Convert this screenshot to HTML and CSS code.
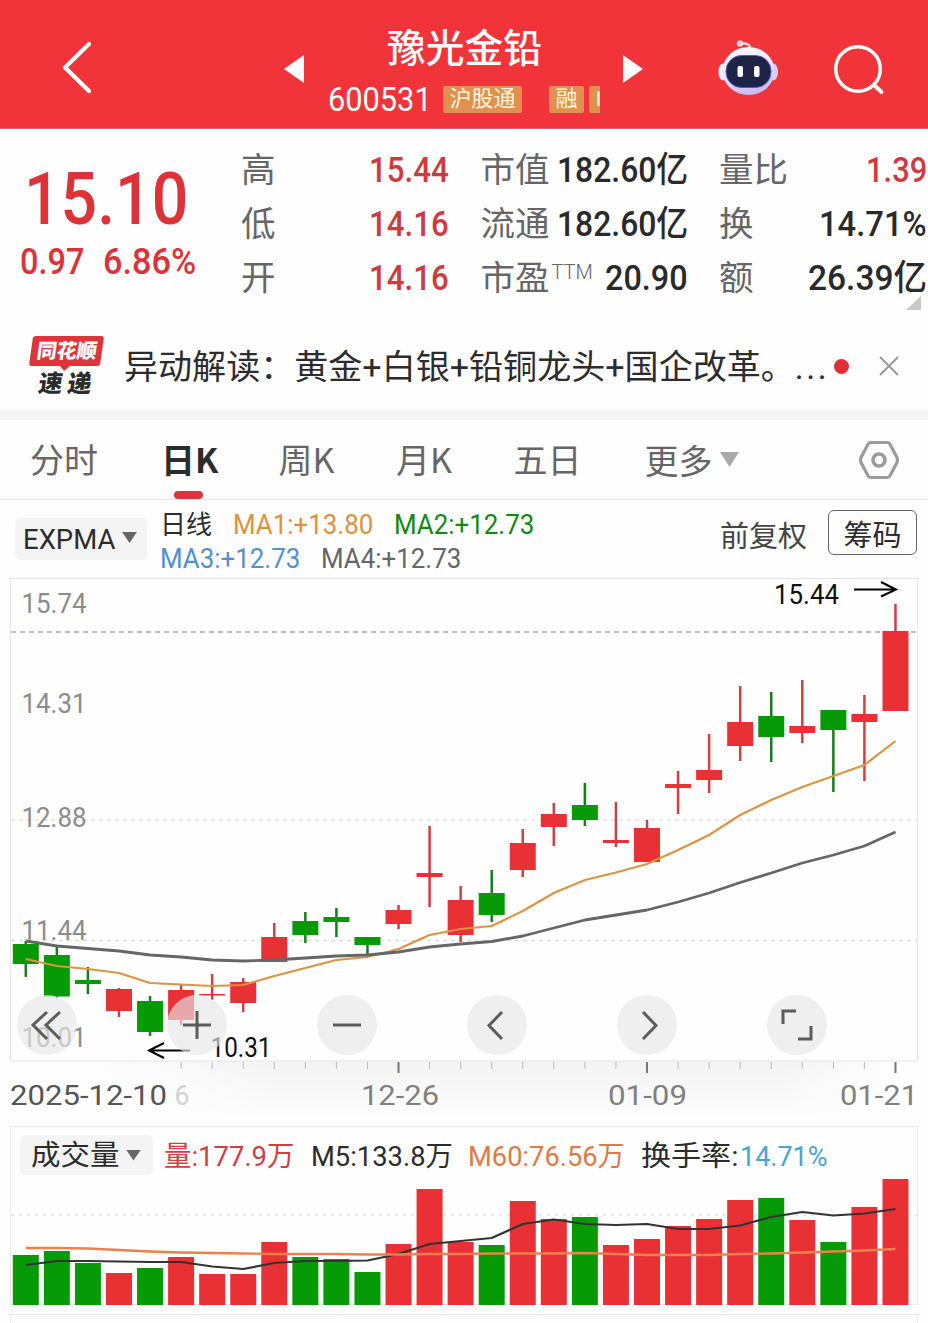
FILE: index.html
```html
<!DOCTYPE html>
<html lang="zh-CN">
<head>
<meta charset="utf-8">
<title>豫光金铅 600531</title>
<link rel="stylesheet" href="styles.css">
</head>
<body>
<header class="topbar">
  <svg class="back" width="34" height="56" viewBox="0 0 34 56"><path d="M29 5 5 28.500 29 52" fill="none" stroke="#fff" stroke-width="4.200" stroke-linecap="round" stroke-linejoin="round"/></svg>
  <div class="switcher">
    <svg width="20" height="28" viewBox="0 0 20 28"><path d="M20 0V28L0 14Z" fill="#fff"/></svg>
    <div class="stock">
      <div class="name"><span class="fit" data-w="155">豫光金铅</span></div>
      <div class="code-row">
        <span class="fit code" data-w="104">600531</span>
        <span class="tag tag-hgt">沪股通</span>
        <span class="tag tag-rong">融</span>
        <span class="tag tag-cut"><i></i></span>
      </div>
    </div>
    <svg width="20" height="28" viewBox="0 0 20 28"><path d="M0 0V28L20 14Z" fill="#fff"/></svg>
  </div>
  <svg class="robot" width="60" height="58" viewBox="718 39 60 58">
    <defs><linearGradient id="shell" x1="0" y1="0" x2="0.300" y2="1"><stop offset="0" stop-color="#fff"/><stop offset=".6" stop-color="#e9e2fb"/><stop offset="1" stop-color="#c9bdf5"/></linearGradient></defs>
    <path d="M741 44Q750 42 750 49" fill="none" stroke="#fbd3dc" stroke-width="2.400"/>
    <circle cx="740" cy="43.500" r="3.200" fill="#fbd3dc"/>
    <ellipse cx="723" cy="72" rx="4.500" ry="8.500" fill="#f5efff"/>
    <ellipse cx="773.500" cy="72" rx="4.500" ry="8.500" fill="#d8ccf8"/>
    <ellipse cx="748.500" cy="71" rx="26" ry="24" fill="url(#shell)"/>
    <rect x="726" y="55.500" width="45" height="32" rx="15.500" fill="#1d2445" stroke="#5b56c8" stroke-width="1"/>
    <rect x="737.500" y="66" width="5.500" height="11" rx="2" fill="#fff"/>
    <rect x="754" y="66" width="5.500" height="11" rx="2" fill="#fff"/>
  </svg>
  <svg class="search" width="54" height="54" viewBox="833 43 54 54"><circle cx="858" cy="69" r="22.300" fill="none" stroke="#fff" stroke-width="3.500"/><path d="M874 85 881.500 92" stroke="#fff" stroke-width="4" stroke-linecap="round"/></svg>
</header>

<section class="quote">
  <div class="price">
    <div class="last"><span class="fit" data-w="164">15.10</span></div>
    <div class="change"><span class="fit" data-w="64">0.97</span><span class="fit" data-w="93">6.86%</span></div>
  </div>
  <dl class="stats">
    <div><dt>高</dt><dd class="up"><span class="fit" data-w="80">15.44</span></dd></div>
    <div><dt>市值</dt><dd><span class="fit" data-w="131">182.60亿</span></dd></div>
    <div><dt>量比</dt><dd class="up"><span class="fit" data-w="61">1.39</span></dd></div>
    <div><dt>低</dt><dd class="up"><span class="fit" data-w="80">14.16</span></dd></div>
    <div><dt>流通</dt><dd><span class="fit" data-w="131">182.60亿</span></dd></div>
    <div><dt>换</dt><dd><span class="fit" data-w="108">14.71%</span></dd></div>
    <div><dt>开</dt><dd class="up"><span class="fit" data-w="80">14.16</span></dd></div>
    <div><dt>市盈<sup>TTM</sup></dt><dd><span class="fit" data-w="83">20.90</span></dd></div>
    <div><dt>额</dt><dd><span class="fit" data-w="119">26.39亿</span></dd></div>
  </dl>
  <svg class="corner" width="15" height="14" viewBox="0 0 15 14"><path d="M15 0V14H0Z" fill="#c8c8c8"/></svg>
</section>

<section class="news">
  <div class="brand">
    <div class="brand-top"><span class="fit" data-w="60">同花顺</span></div>
    <div class="brand-bottom"><span>速</span><span>递</span></div>
  </div>
  <div class="headline"><span class="fit" data-w="705">异动解读：黄金+白银+铅铜龙头+国企改革。<span class="dots">...</span></span></div>
  <i class="dot"></i>
  <svg class="close" width="22" height="22" viewBox="0 0 22 22"><path d="M2 2 20 20M20 2 2 20" stroke="#999" stroke-width="2"/></svg>
</section>

<nav class="tabs">
  <span>分时</span><span class="active">日K</span><span>周K</span><span>月K</span><span>五日</span>
  <span class="more">更多<svg width="19" height="15" viewBox="0 0 19 15"><path d="M0 0H19L9.500 15Z" fill="#aaa"/></svg></span>
  <svg class="settings" width="42" height="40" viewBox="0 0 42 40"><path d="M13 2.500H29Q31 2.500 32 4.200L39 17.500Q40 20 39 22.500L32 35.800Q31 37.500 29 37.500H13Q11 37.500 10 35.800L3 22.500Q2 20 3 17.500L10 4.200Q11 2.500 13 2.500Z" fill="none" stroke="#9b9b9b" stroke-width="3.200"/><circle cx="21" cy="20" r="6" fill="none" stroke="#9b9b9b" stroke-width="3.600"/></svg>
</nav>

<section class="indicator">
  <button class="pill expma"><span class="fit" data-w="92">EXPMA</span><i class="caret"></i></button>
  <div class="ma">
    <div><span class="fit period" data-w="52">日线</span><span class="fit c-orange" data-w="140">MA1:+13.80</span><span class="fit c-green" data-w="140">MA2:+12.73</span></div>
    <div><span class="fit c-blue" data-w="140">MA3:+12.73</span><span class="fit c-gray" data-w="140">MA4:+12.73</span></div>
  </div>
  <span class="adjust">前复权</span>
  <button class="chips">筹码</button>
</section>

<section class="kline">
  <svg id="kline" width="928" height="548" viewBox="0 578 928 548"></svg>
  <div class="controls">
    <button><svg viewBox="0 0 60 60"><path d="M30 17 16 30 30 44M43 17 29 30 43 44"/></svg></button>
    <button><svg viewBox="0 0 60 60"><path d="M16 30H44M30 16V44"/></svg></button>
    <button><svg viewBox="0 0 60 60"><path d="M16 30H44"/></svg></button>
    <button><svg viewBox="0 0 60 60"><path d="M35 17 22 30.500 35 44"/></svg></button>
    <button><svg viewBox="0 0 60 60"><path d="M26 17 39 30.500 26 44"/></svg></button>
    <button><svg viewBox="0 0 60 60"><path d="M16 29V16H29M44 31V44H31"/></svg></button>
  </div>
</section>

<section class="volume">
  <div class="vol-head">
    <button class="pill vol-pill"><span class="fit" data-w="89">成交量</span><i class="caret"></i></button>
    <span class="fit c-red" data-w="131">量:177.9万</span>
    <span class="fit c-dark" data-w="142">M5:133.8万</span>
    <span class="fit c-salmon" data-w="157">M60:76.56万</span>
    <span class="fit c-dark turn" data-w="97">换手率:</span><span class="fit c-cyan" data-w="87">14.71%</span>
  </div>
  <svg id="volume" width="928" height="126" viewBox="0 1179 928 126"></svg>
</section>
<div class="next-panel"></div>
<script src="app.js"></script>
</body>
</html>
```

FILE: styles.css
```css
* { box-sizing: border-box; }
body { margin: 0; width: 928px; height: 1323px; overflow: hidden; background: #fefefe; color: #2c2c2c; font-family: Roboto, "Noto Sans CJK SC", sans-serif; }
button { border: 0; padding: 0; margin: 0; background: none; font: inherit; color: inherit; }
svg { display: block; flex: none; }
.fit { display: inline-block; white-space: nowrap; flex: none; }
.fit > b { display: inline-block; font-weight: inherit; transform-origin: 0 50%; }

.topbar { height: 129px; display: flex; align-items: flex-start; padding-left: 60px; background: #f1333a; border-bottom: 1px solid #c9666c; color: #fff; }
.back { margin-top: 39px; }
.switcher { display: flex; width: 359px; margin-left: 190px; justify-content: space-between; }
.switcher > svg { margin-top: 55px; }
.stock { width: 319px; padding: 16px 0 0 1px; }
.name { height: 58px; line-height: 58px; font-size: 38.500px; font-weight: 500; padding-left: 82px; font-family: "Noto Sans CJK SC", sans-serif; }
.code-row { display: flex; height: 50px; align-items: center; padding-left: 23px; }
.code { font-size: 34px; line-height: 50px; }
.tag { flex: none; height: 27px; background: #e2904f; border-radius: 2px; font-size: 22px; line-height: 25px; text-align: center; white-space: nowrap; color: #fff4dc; }
.tag-hgt { width: 79px; margin-left: 11px; }
.tag-rong { width: 35px; margin-left: 27px; }
.tag-cut { width: 11px; margin-left: 5px; padding: 5px 0 0 8px; border-radius: 2px 0 0 2px; }
.tag-cut i { display: block; width: 3px; height: 15px; background: #ffe9c8; }
.robot { margin: 39px 0 0 75px; }
.search { margin: 43px 0 0 55px; }

.quote { position: relative; height: 201px; display: flex; }
.price { width: 241px; color: #dc3238; font-weight: 500; }
.last { height: 92px; margin-top: 24px; padding-left: 24px; font-size: 73px; line-height: 92px; }
.change { display: flex; gap: 19px; padding-left: 20px; font-size: 36.500px; line-height: 34px; }
.stats { margin: 14px 0 0; display: grid; grid-template-columns: 208px 207px 208px; column-gap: 31.500px; grid-template-rows: repeat(3, 54px); flex: none; }
.stats > div { display: flex; justify-content: space-between; align-items: center; line-height: 54px; }
dt { font: 34.500px/54px "Noto Sans CJK SC", sans-serif; color: #666; height: 60px; white-space: nowrap; }
dt sup { display: inline-block; width: 40px; padding-left: 2px; font: 300 20px/20px Roboto, sans-serif; vertical-align: 11px; }
dd { margin: 0; font-size: 35.500px; font-weight: 500; color: #2a2a2a; }
dd.up { color: #cf3a3e; }
.corner { position: absolute; right: 7px; bottom: 20px; }

.news { height: 90px; display: flex; border-bottom: 10px solid #f5f5f5; padding-left: 30px; }
.brand { width: 94px; padding-top: 6px; font-family: "Noto Sans CJK SC", sans-serif; }
.brand-top { position: relative; width: 71px; height: 30px; margin-left: 1px; background: #dd343b; border-radius: 3px; transform: skewX(-8deg); color: #fff; font-size: 20px; line-height: 28px; font-weight: 900; padding-left: 6px; }
.brand-top::after { content: ""; position: absolute; left: 31px; top: 30px; border: 5px solid transparent; border-top-color: #dd343b; border-bottom: 0; }
.brand-bottom { display: flex; gap: 5px; padding-left: 9px; font-size: 24px; line-height: 32px; font-weight: 900; transform: skewX(-8deg); }
.headline { width: 709.500px; flex: none; font-size: 34px; line-height: 75px; }
.dots { letter-spacing: 2.500px; }
.dot { flex: none; width: 15px; height: 15px; border-radius: 50%; background: #e03036; margin: 28.500px 0 0 0; }
.close { margin: 25px 0 0 29px; }

.tabs { display: flex; height: 80px; border-bottom: 1px solid #e6e6e6; padding-left: 30px; font-family: "Noto Sans CJK SC", sans-serif; font-size: 34px; line-height: 78px; color: #666; }
.tabs > span { height: 79px; width: 117.500px; white-space: nowrap; }
.tabs > span:first-child { width: 131px; }
.tabs .active { position: relative; color: #2c2c2c; font-weight: 700; }
.active::after { content: ""; position: absolute; left: 13px; bottom: 0; width: 29px; height: 8px; border-radius: 4px; background: #dc343a; }
.tabs > span:nth-child(5) { width: 131px; }
.tabs .more { display: flex; align-items: center; gap: 7px; width: 214px; }
.settings { margin: 20px 0 0 -1px; }

.indicator { display: flex; height: 78px; padding-left: 15px; }
.pill { display: flex; align-items: center; background: #f4f4f4; border-radius: 5px; }
.caret { width: 15px; height: 11px; background: #666; clip-path: polygon(0 0, 100% 0, 50% 100%); }
.expma { width: 132px; height: 42px; margin-top: 18px; padding: 2px 0 0 8px; gap: 7px; font-size: 27.500px; line-height: 44px; }
.expma .caret { margin-top: -5px; }
.ma { width: 573px; padding: 8px 0 0 13px; font-size: 27px; line-height: 34.500px; }
.ma div { display: flex; gap: 21px; height: 34px; }
.ma .period { font-size: 26px; color: #2c2c2c; line-height: 34px; }
.c-orange { color: #dc913d; }
.c-green { color: #108a10; }
.c-blue { color: #4f92cd; }
.c-gray { color: #666; }
.c-red { color: #cf4043; }
.c-dark { color: #2c2c2c; }
.c-salmon { color: #e07a45; }
.c-cyan { color: #48a5cf; }
.adjust { width: 108px; font: 29px/68px "Noto Sans CJK SC", sans-serif; color: #444; }
.chips { width: 89px; height: 45px; margin-top: 10px; border: 1.500px solid #666; border-radius: 6px; font: 29px/40px "Noto Sans CJK SC", sans-serif; }

.kline { position: relative; height: 548px; }
.controls { position: absolute; left: 17px; top: 417px; display: flex; gap: 90px; }
.controls button { width: 60px; height: 60px; border-radius: 50%; background: rgba(231, 231, 231, .66); }
.controls path { fill: none; stroke: #5c5c5c; stroke-width: 3; }

.volume { height: 179px; margin: 0 10px; border: 1px solid #e8e8e8; border-bottom-color: #eee; }
.volume > svg { margin-left: -11px; }
.vol-head { display: flex; align-items: center; height: 52px; padding: 4px 0 0 9px; font-size: 28.500px; line-height: 42px; }
.vol-pill { width: 133px; height: 40px; padding-left: 9px; gap: 8px; margin-right: 11px; }
.vol-pill .fit { padding-top: 2px; }
.vol-head > .fit { margin-right: 15.500px; padding-top: 3px; }
.vol-head > .turn { margin-right: 2px; }
.next-panel { height: 20px; margin: 9px 10px 0; border: 1px solid #e8e8e8; }
```

FILE: app.js
```js
const RED = '#e93135', GREEN = '#079a07';
const x = i => 25.8 + i * 31.06;

// [up, body top, body bottom, wick top, wick bottom, volume bar top]
const days = [
  [0,944,964,941,977,1255],[0,955,996.500,947,998,1251],[0,980,984,967,994,1263],[1,989,1011,988,1017,1273],
  [0,1001,1032,996,1036,1268],[1,990,1020,985,1025,1257],[1,994,995.500,974,1000,1274],[1,982,1003,978,1012,1274],
  [1,937,962,923,962,1242],[0,921,935,912,943,1257],[0,917,922,908,937,1259],[0,937,945,937,954,1272],
  [1,910,924,905,929,1244],[1,873,877,826,907,1189],[1,900,935,886,942,1242],[0,893,915,870,922,1245],
  [1,843,870,829,877,1201],[1,814,827,803,846,1219],[0,805,820,783,826,1217],[1,840,843,802,847,1245],
  [1,828,862,820,862,1239],[1,784,788,771,814,1226],[1,770,780,734,793,1219],[1,722,746,686,761,1200],
  [0,716,737,692,762,1198],[1,726,733,680,743,1220],[0,710,730,710,792,1242],[1,714,722,695,781,1207],
  [1,631,711,604,711,1179]
];
const ma1 = [959,966,969,973,983,984.500,986,985,976,968,960,957,949,935,929,926,911,893,880,872.500,864,850,835,815,800,787,776,765,741];
const ma4 = [941,946,948.500,951,955,957,960,961,960,958,956,955,952,947,944,941.500,936,928,920,915,910,902,893,882.500,873,863,855,846,832];
const m5 = [1265,1261,1261,1261.500,1262,1262,1266.500,1269,1263,1261,1261,1260.500,1254,1244,1241,1238,1224,1219.500,1224,1225,1224,1229,1229,1225.500,1217,1212,1215.500,1213.500,1209];
const m60 = [1248,1248,1248.500,1250,1251.500,1252.500,1253,1253.500,1254,1254,1254,1254.500,1254.500,1254,1254,1253.500,1253.500,1253.500,1253,1254,1255,1255,1255,1254,1253.500,1252.500,1251.500,1250.500,1249];

const line = (ys, color, w) => `<polyline points="${ys.map((y, i) => x(i).toFixed(1) + ',' + y).join(' ')}" fill="none" stroke="${color}" stroke-width="${w}" stroke-linejoin="round"/>`;
const rect = (x0, y0, w, h, fill) => `<rect x="${x0}" y="${y0}" width="${w}" height="${h}" fill="${fill}"/>`;
const label = (s, x0, base, w, fill, size = 28) => `<text x="${x0}" y="${base}" textLength="${w}" lengthAdjust="spacingAndGlyphs" font-size="${size}" fill="${fill}">${s}</text>`;
const dash = (y, color, pattern) => `<path d="M11 ${y}H917" stroke="${color}" stroke-width="1.500" stroke-dasharray="${pattern}"/>`;

let k = `<defs><linearGradient id="fade" x2="0" y2="1"><stop stop-color="#f3f3f3"/><stop offset="1" stop-color="#fefefe"/></linearGradient>
<linearGradient id="side"><stop stop-color="#fefefe"/><stop offset=".25" stop-color="#fefefe" stop-opacity="0"/><stop offset=".85" stop-color="#fefefe" stop-opacity="0"/><stop offset="1" stop-color="#fefefe"/></linearGradient></defs>`;
k += rect(80, 1061, 820, 60, 'url(#fade)') + rect(80, 1061, 820, 60, 'url(#side)');
k += '<rect x="10.500" y="578.500" width="907" height="482.500" fill="none" stroke="#e5e5e5"/>';
k += dash(820, '#e4e4e4', '4 4') + dash(940.5, '#dcdcdc', '4 4') + dash(632, '#aaa', '5 4');
[['15.74',612.5],['14.31',712.5],['12.88',826.5],['11.44',940],['10.01',1047]].forEach(([s, y]) => { k += label(s, 21.5, y, 65, '#8c8c8c'); });
days.forEach(([up, t, b, hi, lo], i) => {
  const c = up ? RED : GREEN;
  k += rect(x(i) - 1.25, hi, 2.5, lo - hi, up ? '#cf3f43' : '#14801a') + rect(x(i) - 13, t, 26, b - t, c);
});
k += line(ma1, '#dc9440', 2.2) + line(ma4, '#666', 2.8);
k += label('15.44', 774, 604, 65, '#111', 27) + label('10.31', 210.5, 1057, 61, '#111', 27);
k += '<path d="M854 589.500H894M881 582 896 589.500 881 596.500" fill="none" stroke="#000" stroke-width="2"/>';
k += '<path d="M190 1050.500H150M164 1043 149 1050.500 164 1058" fill="none" stroke="#000" stroke-width="2"/>';
for (let i = 5; i < 29; i++) {
  const major = i === 12 || i === 20 || i === 28;
  k += rect(x(i) - (major ? 1 : 0.5), 1062, major ? 2 : 1, major ? 11 : 7, major ? '#777' : '#bbb');
}
k += label('2025-12-10', 10, 1105, 157, '#555') + label('6', 174.5, 1105, 15, '#d2d2d2');
k += label('12-26', 361, 1105, 78, '#808080') + label('01-09', 608, 1105, 79, '#808080') + label('01-21', 840, 1105, 78, '#808080');
document.getElementById('kline').innerHTML = k;

let v = dash(1215, '#e2e2e2', '3 5');
days.forEach((d, i) => { v += rect(x(i) - 13, d[5], 26, 1305 - d[5], d[0] ? RED : GREEN); });
v += line(m5, '#333', 2.2) + line(m60, '#ed814c', 2.3);
document.getElementById('volume').innerHTML = v;

// Condense each figure or label so it fills its assigned width.
document.querySelectorAll('.fit').forEach(el => {
  const inner = document.createElement('b');
  while (el.firstChild) inner.appendChild(el.firstChild);
  el.appendChild(inner);
  const target = +el.dataset.w;
  const natural = inner.offsetWidth;
  inner.style.transform = `scaleX(${target / natural})`;
  el.style.width = target + 'px';
});
```
